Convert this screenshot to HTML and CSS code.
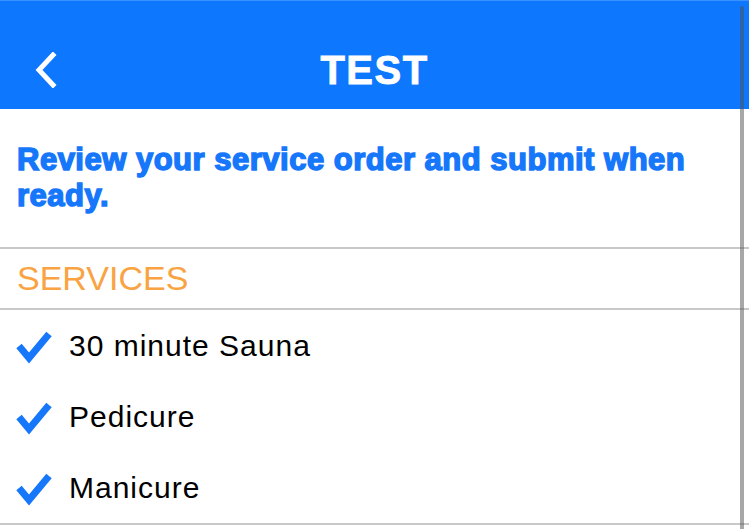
FILE: index.html
```html
<!DOCTYPE html>
<html>
<head>
<meta charset="utf-8">
<link rel="stylesheet" href="styles.css">
</head>
<body>
<div class="screen">
  <header class="topbar">
    <div class="back">
      <svg width="24" height="36" viewBox="0 0 24 36"><path d="M19 3 L5 18 L19 33" fill="none" stroke="#fff" stroke-width="5" stroke-linecap="square" stroke-linejoin="miter"/></svg>
    </div>
    <h1 class="title">TEST</h1>
    <div class="spacer"></div>
  </header>
  <section class="intro">
    <p>Review your service order and submit when ready.</p>
  </section>
  <div class="section-head">SERVICES</div>
  <ul class="services">
    <li><svg class="check" width="36" height="36" viewBox="0 0 36 36"><path d="M3 18 L13 30 L33 6" fill="none" stroke="#1677fb" stroke-width="7" stroke-linejoin="miter" stroke-linecap="butt"/></svg><span>30 minute Sauna</span></li>
    <li><svg class="check" width="36" height="36" viewBox="0 0 36 36"><path d="M3 18 L13 30 L33 6" fill="none" stroke="#1677fb" stroke-width="7" stroke-linejoin="miter" stroke-linecap="butt"/></svg><span>Pedicure</span></li>
    <li><svg class="check" width="36" height="36" viewBox="0 0 36 36"><path d="M3 18 L13 30 L33 6" fill="none" stroke="#1677fb" stroke-width="7" stroke-linejoin="miter" stroke-linecap="butt"/></svg><span>Manicure</span></li>
  </ul>
  <div class="scrollbar"></div>
</div>
</body>
</html>
```

FILE: styles.css
```css
html, body {
  margin: 0;
  padding: 0;
  background: #fff;
}
body {
  font-family: "Liberation Sans", Arial, sans-serif;
}
.screen {
  position: relative;
  width: 749px;
  height: 529px;
  overflow: hidden;
}
.topbar {
  height: 109px;
  padding-top: 28px;
  background: #0d77fe;
  border-top: 1px solid #3b92ff;
  box-sizing: border-box;
  display: grid;
  grid-template-columns: 1fr auto 1fr;
  align-items: center;
}
.back {
  padding-left: 34px;
  padding-top: 2px;
  display: flex;
  align-items: center;
}
.title {
  margin: 0;
  padding-top: 2px;
  color: #fff;
  font-size: 40px;
  font-weight: 700;
  letter-spacing: 1.5px;
  -webkit-text-stroke: 0.8px #fff;
}
.intro {
  padding: 33px 18px 0 17px;
  height: 140px;
  box-sizing: border-box;
  border-bottom: 2px solid #c8c8c8;
}
.intro p {
  margin: 0;
  color: #1677fb;
  font-size: 31px;
  line-height: 36px;
  font-weight: 700;
  -webkit-text-stroke: 1.5px #1677fb;
  letter-spacing: 0.5px;
}
.section-head {
  height: 61px;
  box-sizing: border-box;
  border-bottom: 2px solid #c8c8c8;
  display: flex;
  align-items: center;
  padding-left: 17px;
  padding-bottom: 0;
  color: #f9a343;
  font-size: 34px;
}
.services {
  list-style: none;
  margin: 0;
  padding: 0;
  border-bottom: 2px solid #c8c8c8;
}
.services li {
  height: 71px;
  display: flex;
  align-items: center;
  gap: 17px;
  padding-left: 16px;
  font-size: 30px;
  letter-spacing: 1px;
  color: #000;
}
.check {
  flex: none;
}
.scrollbar {
  position: absolute;
  top: 6px;
  right: 5px;
  width: 4px;
  bottom: 0;
  border-radius: 2px 2px 0 0;
  background: rgba(80, 80, 80, 0.5);
}
```
